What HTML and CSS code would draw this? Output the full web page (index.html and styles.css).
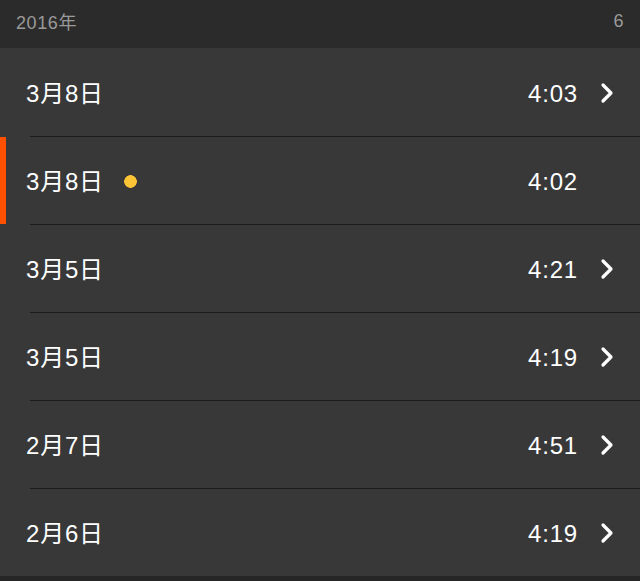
FILE: index.html
```html
<!DOCTYPE html>
<html lang="ja">
<head>
<meta charset="UTF-8">
<meta name="viewport" content="width=device-width, initial-scale=1.0">
<title>履歴</title>
<link rel="stylesheet" href="styles.css">
</head>
<body>
    <div class="year-header">
        <span>2016年</span>
        <span>6</span>
    </div>
    <ul class="list">
        <li class="row">
            <span class="date">3月8日</span>
            <span class="time">4:03</span>
            <svg class="chev" viewBox="0 0 16 24"><path d="M4 4 L12 12 L4 20" /></svg>
        </li>
        <li class="row current">
            <span class="date">3月8日</span>
            <span class="dot"></span>
            <span class="time">4:02</span>
            <span class="chev"></span>
        </li>
        <li class="row">
            <span class="date">3月5日</span>
            <span class="time">4:21</span>
            <svg class="chev" viewBox="0 0 16 24"><path d="M4 4 L12 12 L4 20" /></svg>
        </li>
        <li class="row">
            <span class="date">3月5日</span>
            <span class="time">4:19</span>
            <svg class="chev" viewBox="0 0 16 24"><path d="M4 4 L12 12 L4 20" /></svg>
        </li>
        <li class="row">
            <span class="date">2月7日</span>
            <span class="time">4:51</span>
            <svg class="chev" viewBox="0 0 16 24"><path d="M4 4 L12 12 L4 20" /></svg>
        </li>
        <li class="row">
            <span class="date">2月6日</span>
            <span class="time">4:19</span>
            <svg class="chev" viewBox="0 0 16 24"><path d="M4 4 L12 12 L4 20" /></svg>
        </li>
    </ul>
</body>
</html>
```

FILE: styles.css
```css
/* year list */
body {
    margin: 0;
    background-color: #262626;
    font-family: "Liberation Sans", "Noto Sans CJK JP", sans-serif;
    color: #fff;
}
.year-header {
    display: flex;
    justify-content: space-between;
    align-items: center;
    height: 48px;
    padding: 0 16px 6px 16px;
    box-sizing: border-box;
    background-color: #2b2b2b;
    color: #9a9a9a;
    font-size: 18px;
    letter-spacing: 0.6px;
}
.list {
    list-style: none;
    margin: 0;
    padding: 0;
}
.row {
    display: flex;
    align-items: baseline;
    height: 88px;
    padding: 32px 25px 28px 26px;
    box-sizing: border-box;
    background-color: #383838;
    position: relative;
    font-size: 24px;
    line-height: 28px;
    letter-spacing: 0.8px;
}
/* separator starts a bit in from the left */
.row + .row::before {
    content: "";
    position: absolute;
    top: 0;
    left: 30px;
    right: 0;
    height: 1px;
    background-color: #1c1c1c;
}
.row.current::after {
    content: "";
    position: absolute;
    left: 0;
    top: 1px;
    bottom: 0;
    width: 6px;
    background-color: #ff5000;
}
.date {
    flex: 1;
}
.row.current .date {
    flex: 0 0 auto;
}
.dot {
    flex: 1;
    align-self: center;
    height: 13px;
    margin: 0 0 2px 20px;
    background: radial-gradient(circle at 6.5px 6.5px, #fdc436 6px, transparent 6.6px);
}
.time {
    width: 60px;
    text-align: right;
    margin-right: -1px;
}
.chev {
    align-self: center;
    flex: none;
    width: 16px;
    height: 24px;
    margin: 0 0 2px 22px;
}
.chev path {
    fill: none;
    stroke: #fff;
    stroke-width: 3.2;
    stroke-linecap: round;
    stroke-linejoin: round;
}
```
